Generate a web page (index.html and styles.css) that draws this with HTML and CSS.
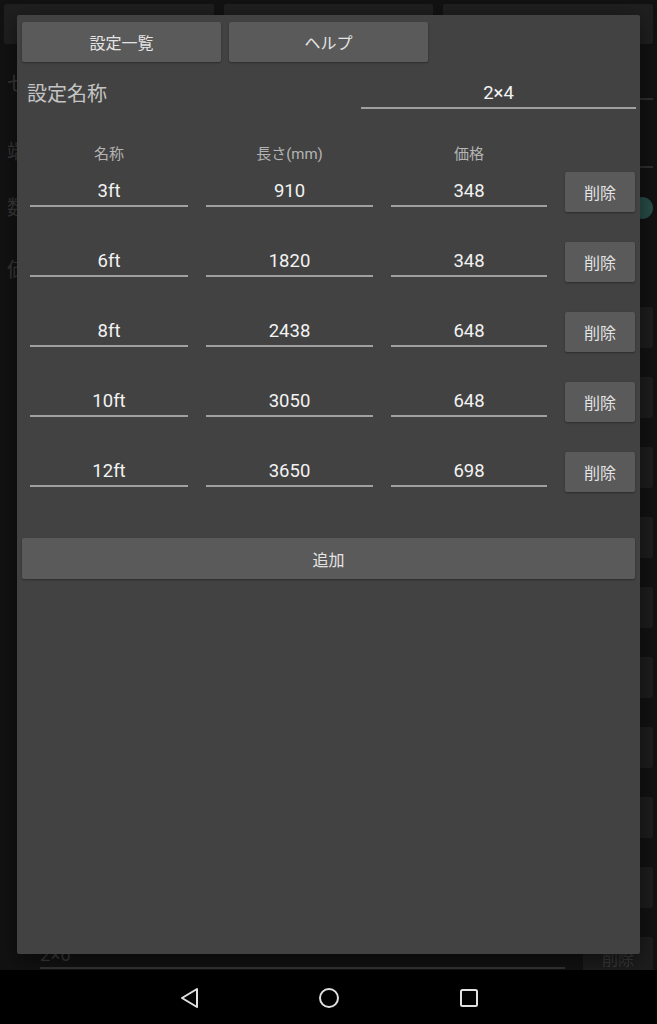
FILE: index.html
```html
<!DOCTYPE html>
<html lang="ja">
<head>
<meta charset="utf-8">
<title>設定</title>
<link rel="stylesheet" href="styles.css">
</head>
<body>
<div class="screen">
  <div class="app">
    <div class="app-top">
      <div class="app-btn"></div>
      <div class="app-btn"></div>
      <div class="app-btn"></div>
    </div>
    <div class="app-row row-a"><span class="app-label">セ</span><span class="app-field"></span></div>
    <div class="app-row row-b"><span class="app-label">端</span><span class="app-field"></span></div>
    <div class="app-row row-c"><span class="app-label">数</span><span class="app-switch"></span></div>
    <div class="app-row row-d"><span class="app-label">価</span></div>
    <div class="app-list">
      <div class="app-item"><span class="app-item-field"></span><span class="app-item-btn"></span></div>
      <div class="app-item"><span class="app-item-field"></span><span class="app-item-btn"></span></div>
      <div class="app-item"><span class="app-item-field"></span><span class="app-item-btn"></span></div>
      <div class="app-item"><span class="app-item-field"></span><span class="app-item-btn"></span></div>
      <div class="app-item"><span class="app-item-field"></span><span class="app-item-btn"></span></div>
      <div class="app-item"><span class="app-item-field"></span><span class="app-item-btn"></span></div>
      <div class="app-item"><span class="app-item-field"></span><span class="app-item-btn"></span></div>
      <div class="app-item"><span class="app-item-field"></span><span class="app-item-btn"></span></div>
      <div class="app-item"><span class="app-item-field"></span><span class="app-item-btn"></span></div>
      <div class="app-item"><span class="app-item-field">2×6</span><span class="app-item-btn">削除</span></div>
    </div>
  </div>

  <div class="dialog">
    <div class="dlg-actions">
      <button class="btn btn-half">設定一覧</button>
      <button class="btn btn-half">ヘルプ</button>
    </div>
    <div class="name-row">
      <span class="name-label">設定名称</span>
      <div class="field name-field">2×4</div>
    </div>
    <div class="grid grid-head">
      <span>名称</span><span>長さ(mm)</span><span>価格</span><span></span>
    </div>
    <div class="rows">
      <div class="grid grid-row">
        <div class="field">3ft</div><div class="field">910</div><div class="field">348</div>
        <button class="btn btn-del">削除</button>
      </div>
      <div class="grid grid-row">
        <div class="field">6ft</div><div class="field">1820</div><div class="field">348</div>
        <button class="btn btn-del">削除</button>
      </div>
      <div class="grid grid-row">
        <div class="field">8ft</div><div class="field">2438</div><div class="field">648</div>
        <button class="btn btn-del">削除</button>
      </div>
      <div class="grid grid-row">
        <div class="field">10ft</div><div class="field">3050</div><div class="field">648</div>
        <button class="btn btn-del">削除</button>
      </div>
      <div class="grid grid-row">
        <div class="field">12ft</div><div class="field">3650</div><div class="field">698</div>
        <button class="btn btn-del">削除</button>
      </div>
    </div>
    <button class="btn btn-add">追加</button>
  </div>

  <nav class="navbar">
    <svg class="nav-icon" viewBox="0 0 24 24"><path d="M20 3 L5 12 L20 21 Z" fill="none" stroke="#e0e0e0" stroke-width="2" stroke-linejoin="round"/></svg>
    <svg class="nav-icon" viewBox="0 0 24 24"><circle cx="12" cy="12" r="9" fill="none" stroke="#e0e0e0" stroke-width="2"/></svg>
    <svg class="nav-icon" viewBox="0 0 24 24"><rect x="4" y="4" width="16" height="16" rx="1.5" fill="none" stroke="#e0e0e0" stroke-width="2"/></svg>
  </nav>
</div>
</body>
</html>
```

FILE: styles.css
```css
* { box-sizing: border-box; }
html, body { margin: 0; padding: 0; }
body {
  background: #000;
  font-family: Roboto, "Noto Sans CJK JP", sans-serif;
}
.screen {
  position: relative;
  width: 657px;
  height: 1024px;
  overflow: hidden;
  background: #121212;
}

/* dimmed underlying screen */
.app {
  height: 970px;
  overflow: hidden;
  padding: 0 4px;
}
.app-top {
  display: flex;
  gap: 10px;
  padding-top: 4px;
}
.app-btn {
  flex: 1;
  height: 40px;
  background: #1f1f1f;
  border-radius: 2px;
}
.app-row {
  display: flex;
  align-items: center;
  height: 48px;
}
.row-a { margin-top: 16px; }
.row-b { margin-top: 20px; }
.row-c { margin-top: 8px; }
.row-d { margin-top: 14px; }
.app-label {
  margin-left: 3px;
  width: 170px;
  font-size: 20px;
  line-height: 1;
  color: #383838;
}
.app-field {
  align-self: flex-start;
  margin-top: 6px;
  flex: 1;
  height: 34px;
  border-bottom: 2px solid #2e2e2e;
}
.app-switch {
  margin-left: auto;
  width: 22px;
  height: 22px;
  border-radius: 50%;
  background: #284c47;
}
.app-list { margin-top: 13px; }
.app-item {
  display: flex;
  align-items: flex-start;
  height: 70px;
}
.app-item-field {
  margin-left: 36px;
  width: 525px;
  height: 32px;
  padding-top: 6px;
  line-height: 24px;
  font-size: 18.5px;
  color: #3a3a3a;
  border-bottom: 2px solid #333;
}
.app-item-btn {
  margin-left: 18px;
  width: 70px;
  height: 41px;
  background: #1d1d1d;
  border-radius: 2px;
  display: flex;
  align-items: center;
  justify-content: center;
  font-size: 16px;
  color: #3a3a3a;
}

/* dialog */
.dialog {
  position: absolute;
  left: 17px;
  top: 15px;
  width: 623px;
  height: 939px;
  background: #424242;
  border-radius: 2px;
  box-shadow: 0 6px 20px rgba(0, 0, 0, 0.5);
  padding: 7px 5px 0;
}
.btn {
  border: 0;
  margin: 0;
  padding: 0;
  font-family: inherit;
  font-size: 16px;
  color: #e4e4e4;
  background: #5a5a5a;
  border-radius: 2px;
  box-shadow: 0 1px 2px rgba(0, 0, 0, 0.35);
  display: flex;
  align-items: center;
  justify-content: center;
}
.dlg-actions {
  display: flex;
  gap: 8px;
}
.btn-half {
  width: 199px;
  height: 40px;
}
.name-row {
  display: flex;
  justify-content: space-between;
  align-items: flex-start;
  margin-top: 11px;
  padding-left: 5px;
  height: 36px;
}
.name-label {
  font-size: 20px;
  line-height: 28px;
  padding-top: 7px;
  color: #c4c4c4;
}
.field {
  height: 36px;
  padding-top: 7px;
  line-height: 27px;
  border-bottom: 2px solid #a0a0a0;
  text-align: center;
  font-size: 18.5px;
  color: #f2f2f2;
}
.name-field {
  width: 275px;
  margin-right: -1px;
}
.grid {
  display: grid;
  grid-template-columns: 158px 167px 156px 70px;
  column-gap: 18px;
  padding-left: 8px;
}
.grid-head {
  margin-top: 35px;
  font-size: 15px;
  line-height: 20px;
  color: #b4b4b4;
  text-align: center;
}
.rows { margin-top: 7px; }
.grid-row {
  height: 70px;
  align-items: start;
}
.btn-del {
  height: 40px;
  margin-top: 1px;
}
.btn-add {
  width: 100%;
  height: 41px;
  margin-top: 17px;
}

/* system nav bar */
.navbar {
  height: 54px;
  background: #000;
  display: flex;
  justify-content: center;
  align-items: center;
  gap: 116px;
  padding-top: 2px;
}
.nav-icon {
  width: 24px;
  height: 24px;
}
```
